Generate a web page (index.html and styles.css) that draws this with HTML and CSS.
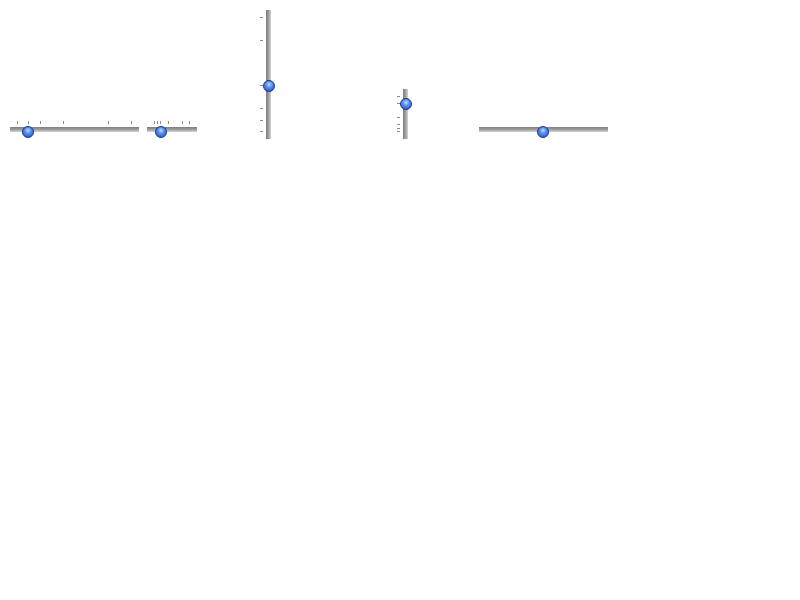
FILE: index.html
```html
<!DOCTYPE html>
<html lang="en">
<head>
  <meta charset="UTF-8" />
  <title>Sliders</title>
  <link rel="stylesheet" href="styles.css">
</head>
<body>
  <div class="row">
    <div class="slider horiz s1">
      <span class="tick" style="left:7px"></span>
      <span class="tick" style="left:18px"></span>
      <span class="tick" style="left:30px"></span>
      <span class="tick" style="left:53px"></span>
      <span class="tick" style="left:98px"></span>
      <span class="tick" style="left:121px"></span>
      <div class="track"></div>
      <span class="thumb" style="left:12px"></span>
    </div>

    <div class="slider horiz s2">
      <span class="tick" style="left:7px"></span>
      <span class="tick" style="left:10px"></span>
      <span class="tick" style="left:13px"></span>
      <span class="tick" style="left:21px"></span>
      <span class="tick" style="left:35px"></span>
      <span class="tick" style="left:42px"></span>
      <div class="track"></div>
      <span class="thumb" style="left:8px"></span>
    </div>

    <div class="slider vert v1">
      <span class="tick" style="top:7px"></span>
      <span class="tick" style="top:30px"></span>
      <span class="tick" style="top:75px"></span>
      <span class="tick" style="top:98px"></span>
      <span class="tick" style="top:110px"></span>
      <span class="tick" style="top:121px"></span>
      <div class="track"></div>
      <span class="thumb" style="top:70px"></span>
    </div>

    <div class="slider vert v2">
      <span class="tick" style="top:7px"></span>
      <span class="tick" style="top:14px"></span>
      <span class="tick" style="top:28px"></span>
      <span class="tick" style="top:35px"></span>
      <span class="tick" style="top:39px"></span>
      <span class="tick" style="top:42px"></span>
      <div class="track"></div>
      <span class="thumb" style="top:9px"></span>
    </div>

    <div class="slider horiz s3">
      <div class="track"></div>
      <span class="thumb" style="left:58px"></span>
    </div>
  </div>
</body>
</html>
```

FILE: styles.css
```css
body {
  margin: 0;
  background: #fff;
  font-family: "Liberation Sans", sans-serif;
}
.row {
  display: flex;
  align-items: flex-start;
  padding: 10px 0 0 10px;
}
.slider {
  position: relative;
  flex: none;
}
.horiz {
  width: 129px;
  height: 17px;
  margin-top: 111px;
}
.horiz .track {
  margin-top: 6px;
  height: 5px;
  background: linear-gradient(to bottom, #7c7c7c, #9e9e9e 50%, #d4d4d4);
}
.horiz .tick {
  position: absolute;
  top: 0;
  width: 1px;
  height: 3px;
  background: #8a8a8a;
}
.horiz .thumb {
  top: 5px;
}
.s2 {
  width: 50px;
  margin-left: 8px;
}
.s3 {
  margin-left: 67px;
}
.vert {
  width: 16px;
}
.vert .track {
  margin-left: 7px;
  width: 5px;
  height: 100%;
  background: linear-gradient(to right, #7c7c7c, #9e9e9e 50%, #d4d4d4);
}
.vert .tick {
  position: absolute;
  left: 1px;
  width: 3px;
  height: 1px;
  background: #8a8a8a;
}
.vert .thumb {
  left: 4px;
}
.v1 {
  height: 129px;
  margin-left: 62px;
}
.v2 {
  height: 50px;
  margin-top: 79px;
  margin-left: 121px;
}
.thumb {
  position: absolute;
  width: 10px;
  height: 10px;
  border: 1px solid #17348a;
  border-radius: 50%;
  background: radial-gradient(circle at 50% 35%, #c4dcff 0%, #5c95ee 35%, #2f66d6 75%, #2249ad 100%);
}
```
